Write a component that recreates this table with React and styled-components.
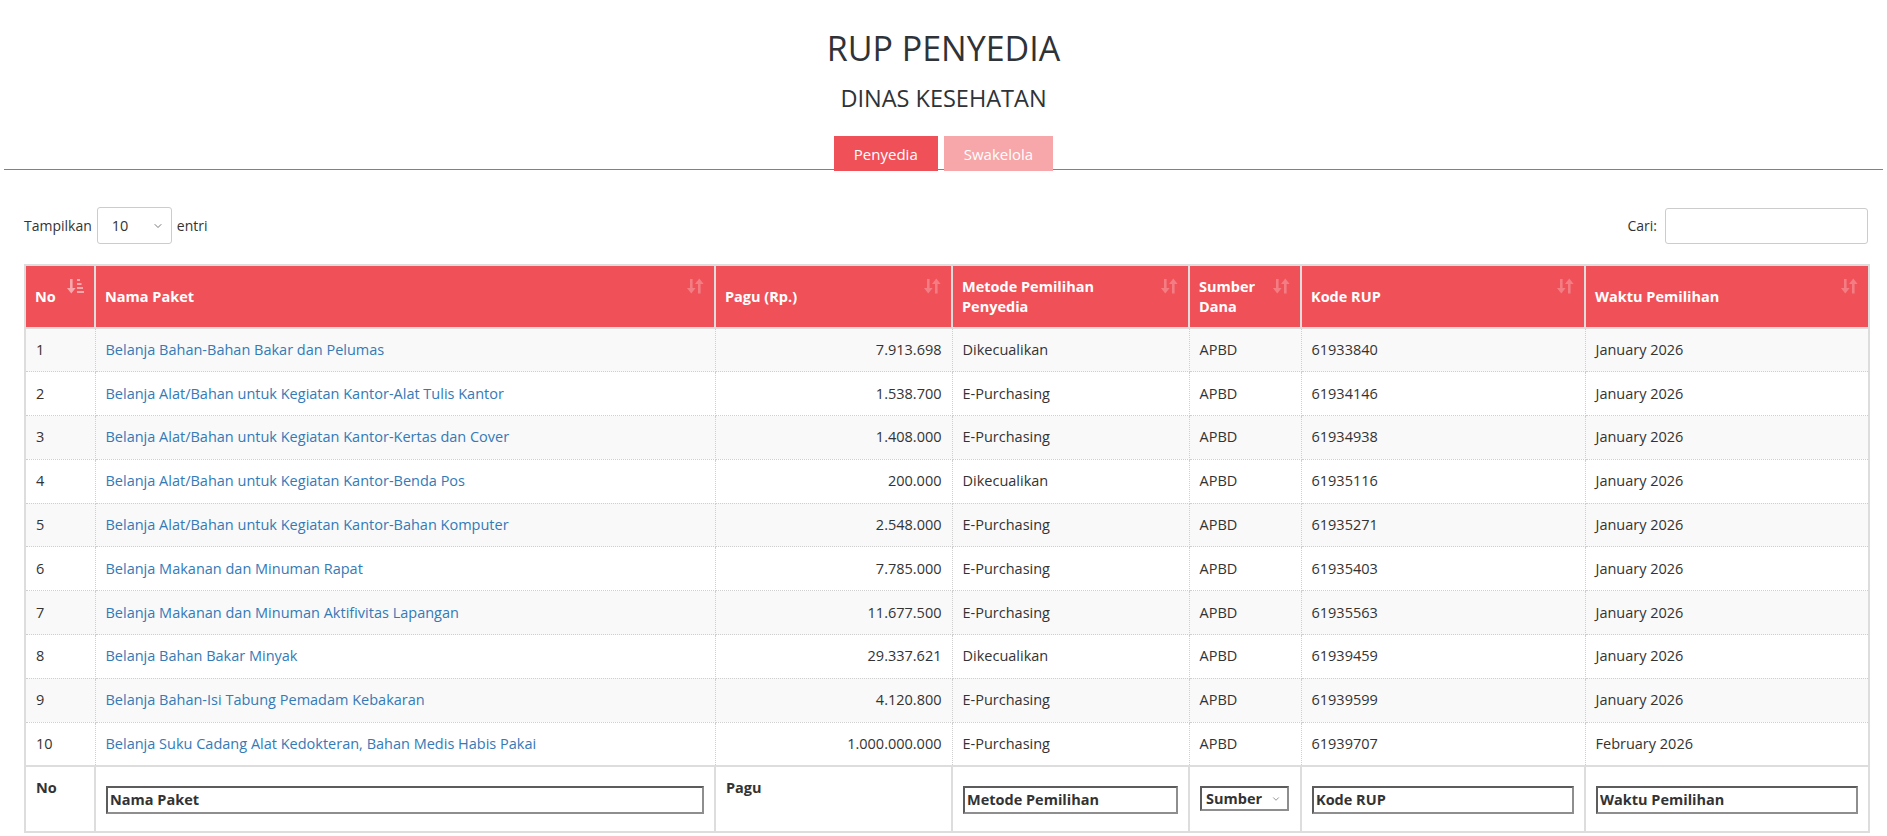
import React from "react";
import styled, { createGlobalStyle } from "styled-components";
import { ChevronDown } from "lucide-react";

const GlobalStyle = createGlobalStyle`
  body {
    margin: 0;
    background: #fff;
    color: #333;
    font-family: "Open Sans", "Noto Sans", sans-serif;
    font-size: 14px;
  }
`;

const RED = "#f05159";

const rows = [
  ["Belanja Bahan-Bahan Bakar dan Pelumas", "7.913.698", "Dikecualikan", "61933840", "January 2026"],
  ["Belanja Alat/Bahan untuk Kegiatan Kantor-Alat Tulis Kantor", "1.538.700", "E-Purchasing", "61934146", "January 2026"],
  ["Belanja Alat/Bahan untuk Kegiatan Kantor-Kertas dan Cover", "1.408.000", "E-Purchasing", "61934938", "January 2026"],
  ["Belanja Alat/Bahan untuk Kegiatan Kantor-Benda Pos", "200.000", "Dikecualikan", "61935116", "January 2026"],
  ["Belanja Alat/Bahan untuk Kegiatan Kantor-Bahan Komputer", "2.548.000", "E-Purchasing", "61935271", "January 2026"],
  ["Belanja Makanan dan Minuman Rapat", "7.785.000", "E-Purchasing", "61935403", "January 2026"],
  ["Belanja Makanan dan Minuman Aktifivitas Lapangan", "11.677.500", "E-Purchasing", "61935563", "January 2026"],
  ["Belanja Bahan Bakar Minyak", "29.337.621", "Dikecualikan", "61939459", "January 2026"],
  ["Belanja Bahan-Isi Tabung Pemadam Kebakaran", "4.120.800", "E-Purchasing", "61939599", "January 2026"],
  ["Belanja Suku Cadang Alat Kedokteran, Bahan Medis Habis Pakai", "1.000.000.000", "E-Purchasing", "61939707", "February 2026"],
];

const columns = [
  { label: "No", width: 70, active: true },
  { label: "Nama Paket", width: 620 },
  { label: "Pagu (Rp.)", width: 237 },
  { label: "Metode Pemilihan Penyedia", width: 237 },
  { label: "Sumber Dana", width: 112 },
  { label: "Kode RUP", width: 284 },
  { label: "Waktu Pemilihan", width: 284 },
];

function SortIcon({ active }) {
  if (active) {
    return (
      <SortSvg viewBox="0 0 17 16" $active>
        <rect x="3" y="1" width="2.6" height="10" />
        <polygon points="0,10 8.6,10 4.3,15.5" />
        <rect x="10" y="1" width="3" height="2" />
        <rect x="10" y="5" width="4.5" height="2" />
        <rect x="10" y="9" width="6" height="2" />
        <rect x="10" y="13" width="7" height="2" />
      </SortSvg>
    );
  }
  return (
    <SortSvg viewBox="0 0 17 16">
      <rect x="3" y="1" width="2.6" height="10" />
      <polygon points="0,10 8.6,10 4.3,15.5" />
      <rect x="11" y="5" width="2.6" height="10.5" />
      <polygon points="8,6 16.6,6 12.3,0.5" />
    </SortSvg>
  );
}

export default function App() {
  return (
    <Page>
      <GlobalStyle />
      <Header>
        <Title>RUP PENYEDIA</Title>
        <Subtitle>DINAS KESEHATAN</Subtitle>
        <TabBar>
          <Tab $active>Penyedia</Tab>
          <Tab>Swakelola</Tab>
        </TabBar>
      </Header>
      <Content>
        <Controls>
          <Label>
            Tampilkan
            <SelectWrap>
              <LengthSelect defaultValue="10">
                <option value="10">10</option>
                <option value="25">25</option>
                <option value="50">50</option>
              </LengthSelect>
              <Chevron>
                <ChevronDown size={12} strokeWidth={1.6} />
              </Chevron>
            </SelectWrap>
            entri
          </Label>
          <Label>
            Cari:
            <SearchInput type="search" />
          </Label>
        </Controls>
        <Table>
          <colgroup>
            {columns.map((c) => (
              <col key={c.label} style={{ width: c.width }} />
            ))}
          </colgroup>
          <thead>
            <tr>
              {columns.map((c) => (
                <HeadCell key={c.label}>
                  {c.label}
                  <SortIcon active={c.active} />
                </HeadCell>
              ))}
            </tr>
          </thead>
          <tbody>
            {rows.map((r, i) => (
              <Row key={i} $odd={i % 2 === 0}>
                <Cell>{i + 1}</Cell>
                <Cell>
                  <Link href="#">{r[0]}</Link>
                </Cell>
                <Cell $right>{r[1]}</Cell>
                <Cell>{r[2]}</Cell>
                <Cell>APBD</Cell>
                <Cell>{r[3]}</Cell>
                <Cell>{r[4]}</Cell>
              </Row>
            ))}
          </tbody>
          <tfoot>
            <tr>
              <FootCell>No</FootCell>
              <FootCell>
                <FilterInput placeholder="Nama Paket" />
              </FootCell>
              <FootCell>Pagu</FootCell>
              <FootCell>
                <FilterInput placeholder="Metode Pemilihan" />
              </FootCell>
              <FootCell>
                <FilterSelectWrap>
                  <FilterSelect defaultValue="">
                    <option value="">Sumber</option>
                    <option value="APBD">APBD</option>
                  </FilterSelect>
                  <SmallChevron>
                    <ChevronDown size={10} strokeWidth={1.5} />
                  </SmallChevron>
                </FilterSelectWrap>
              </FootCell>
              <FootCell>
                <FilterInput placeholder="Kode RUP" />
              </FootCell>
              <FootCell>
                <FilterInput placeholder="Waktu Pemilihan" />
              </FootCell>
            </tr>
          </tfoot>
        </Table>
      </Content>
    </Page>
  );
}

const Page = styled.div`
  padding: 0 4px;
`;

const Header = styled.div`
  text-align: center;
  padding-top: 28px;
`;

const Title = styled.h1`
  margin: 0;
  font-size: 34px;
  line-height: 40px;
  font-weight: 400;
  color: #2f3337;
`;

const Subtitle = styled.h2`
  margin: 15px 0 0;
  font-size: 23.5px;
  line-height: 30px;
  font-weight: 400;
  color: #2f3337;
`;

const TabBar = styled.div`
  display: flex;
  justify-content: center;
  gap: 6px;
  margin-top: 23px;
  border-bottom: 1px solid ${RED};
`;

const Tab = styled.button`
  height: 35px;
  margin-bottom: -2px;
  padding: 0 20px;
  border: none;
  font-family: inherit;
  font-size: 15px;
  color: #fff;
  background: ${(p) => (p.$active ? RED : "#f7a6a9")};
  cursor: pointer;
`;

const Content = styled.div`
  padding: 37px 15px 0 20px;
`;

const Controls = styled.div`
  display: flex;
  justify-content: space-between;
  align-items: center;
  height: 37px;
`;

const Label = styled.label`
  display: flex;
  align-items: center;
  gap: 5px;
  font-size: 14px;
  color: #333;
`;

const SelectWrap = styled.span`
  position: relative;
  display: inline-flex;
`;

const LengthSelect = styled.select`
  appearance: none;
  width: 75px;
  height: 37px;
  padding: 0 14px;
  border: 1px solid #ccc;
  border-radius: 3px;
  background: #fff;
  font-family: inherit;
  font-size: 14.5px;
  color: #333;
`;

const Chevron = styled.span`
  position: absolute;
  right: 8px;
  top: 13px;
  display: flex;
  color: #555;
  pointer-events: none;
`;

const SearchInput = styled.input`
  width: 203px;
  height: 36px;
  box-sizing: border-box;
  margin-left: 3px;
  border: 1px solid #ccc;
  border-radius: 3px;
  padding: 0 8px;
  font-family: inherit;
  font-size: 14px;
`;

const Table = styled.table`
  width: 1844px;
  margin-top: 20px;
  table-layout: fixed;
  border-collapse: collapse;
  border: 2px solid #ddd;
`;

const HeadCell = styled.th`
  position: relative;
  height: 63px;
  box-sizing: border-box;
  padding: 10px 30px 10px 9px;
  background: ${RED};
  color: #fff;
  font-size: 14.5px;
  font-weight: 700;
  line-height: 20px;
  text-align: left;
  vertical-align: middle;
  border: 2px solid #ddd;
`;

const SortSvg = styled.svg`
  position: absolute;
  top: 12px;
  right: 10px;
  width: 17px;
  height: 16px;
  fill: #fff;
  opacity: ${(p) => (p.$active ? 0.5 : 0.25)};
`;

const Row = styled.tr`
  background: ${(p) => (p.$odd ? "#f9f9f9" : "#fff")};
`;

const Cell = styled.td`
  height: 43.8px;
  box-sizing: border-box;
  padding: 0 10px;
  border: 1px dotted #cfcfcf;
  font-size: 14.5px;
  line-height: 20px;
  color: #333;
  vertical-align: middle;
  text-align: ${(p) => (p.$right ? "right" : "left")};
  white-space: nowrap;
`;

const Link = styled.a`
  color: #337ab7;
  text-decoration: none;
`;

const FootCell = styled.td`
  height: 66px;
  box-sizing: border-box;
  padding: 11px 10px 0;
  border: 2px solid #ddd;
  font-size: 14.5px;
  font-weight: 700;
  line-height: 20px;
  color: #333;
  vertical-align: top;
`;

const FilterInput = styled.input`
  display: block;
  width: 100%;
  height: 28px;
  box-sizing: border-box;
  margin-top: 8px;
  padding: 0 2px;
  border: 2px solid;
  border-color: #5c5c5c #8e8e8e #8e8e8e #5c5c5c;
  font-family: inherit;
  font-size: 14.5px;
  font-weight: 700;
  color: #333;
  &::placeholder {
    color: #333;
    opacity: 1;
  }
`;

const FilterSelectWrap = styled.span`
  position: relative;
  display: inline-flex;
  margin-top: 8px;
`;

const FilterSelect = styled.select`
  appearance: none;
  width: 89px;
  height: 25px;
  padding: 0 20px 0 4px;
  border: 2px solid;
  border-color: #5c5c5c #8e8e8e #8e8e8e #5c5c5c;
  background: #fff;
  font-family: inherit;
  font-size: 14.5px;
  font-weight: 700;
  color: #333;
`;

const SmallChevron = styled.span`
  position: absolute;
  right: 8px;
  top: 8px;
  display: flex;
  color: #555;
  pointer-events: none;
`;
